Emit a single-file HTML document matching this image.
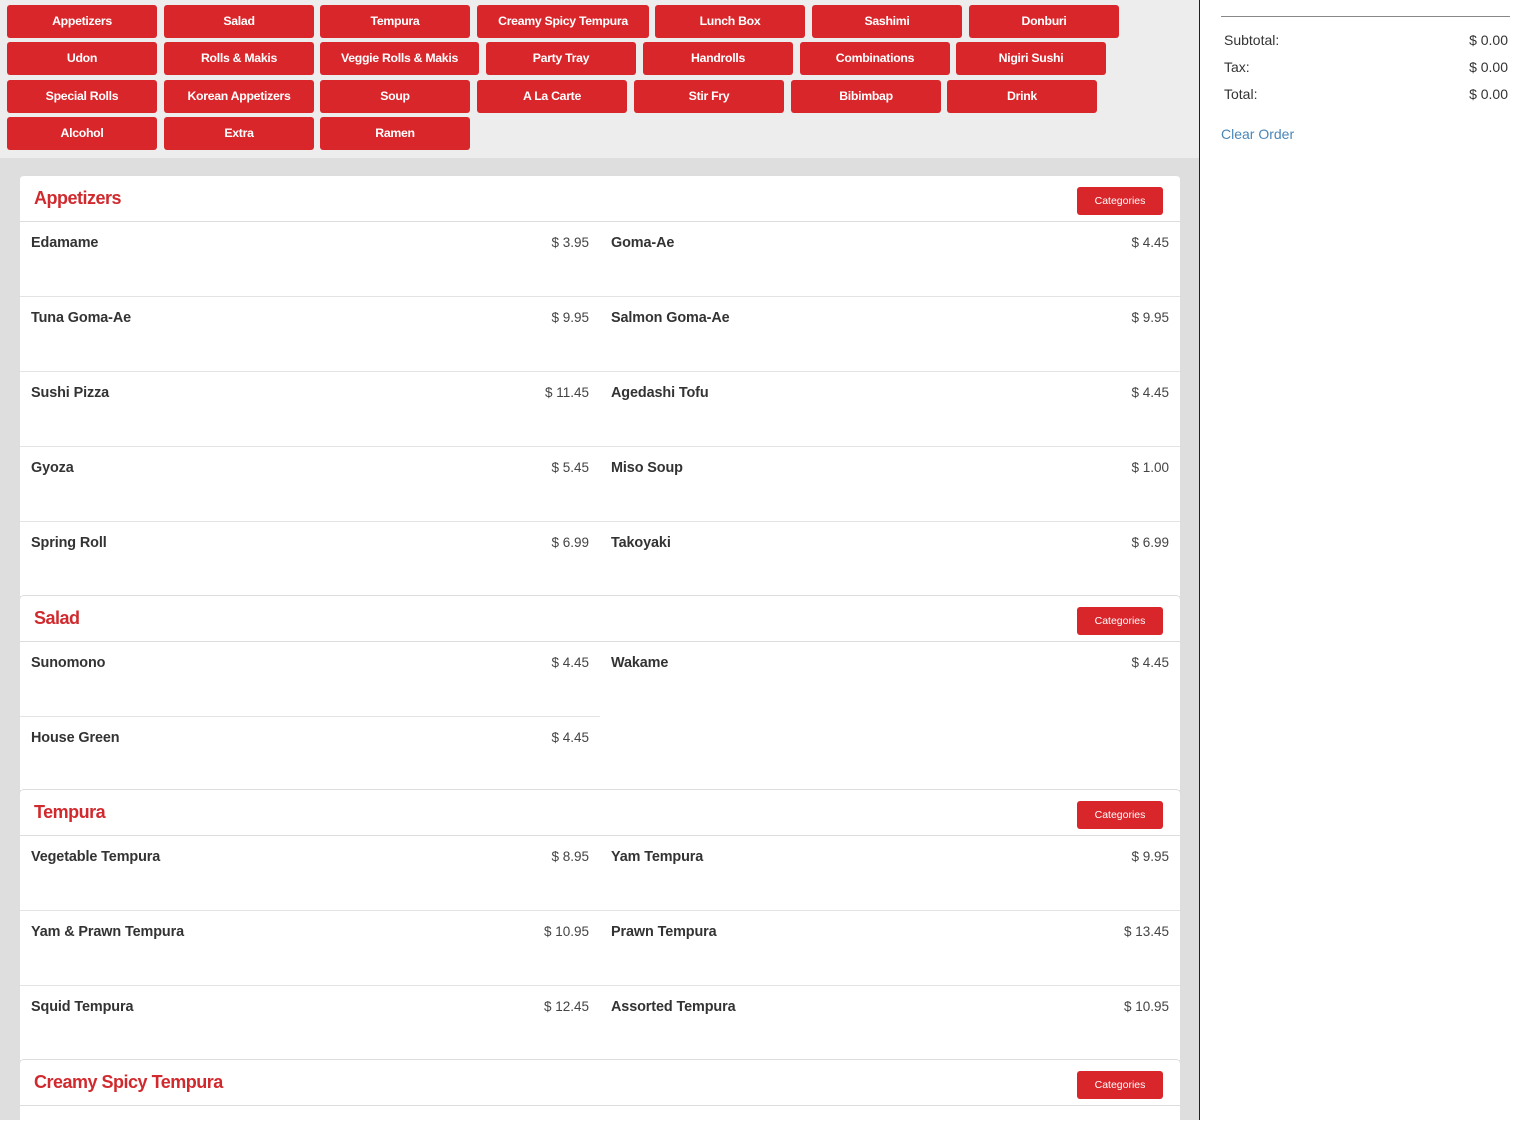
<!DOCTYPE html>
<html><head><meta charset="utf-8"><style>
*{box-sizing:border-box;margin:0;padding:0}
body{width:1530px;height:1120px;overflow:hidden;background:#fff;font-family:"Liberation Sans",Arial,sans-serif;position:relative}
#left{position:absolute;left:0;top:0;width:1200px;height:1120px;background:#dedede;border-right:1px solid #222}
#nav{position:absolute;left:0;top:0;width:1199px;height:158px;background:#ededed}
.b{position:absolute;height:33px;background:#d9262b;color:#fff;border-radius:3px;font-size:12.3px;font-weight:bold;text-align:center;line-height:33px;letter-spacing:-0.3px}
.card{position:absolute;left:20px;width:1160px;background:#fff;border-radius:4px 4px 0 0;border-top:1px solid #ddd}
.hd{height:46px;border-bottom:1px solid #ddd;position:relative}
.hd h2{position:absolute;left:14px;top:12px;color:#d02a2e;font-size:18px;font-weight:bold;letter-spacing:-0.5px}
.cat{position:absolute;right:17px;top:11px;width:86px;height:28px;background:#d9262b;color:#fff;border-radius:3px;font-size:10.5px;text-align:center;line-height:28px}
.it{position:absolute;width:580px;height:75px;border-bottom:1px solid #e3e3e3}
.it .n{position:absolute;left:11px;top:13px;font-size:14.4px;font-weight:bold;color:#333;letter-spacing:-0.1px}
.it .p{position:absolute;right:11px;top:13px;font-size:13.5px;color:#444}
#side{position:absolute;left:1221px;top:0;width:289px}
.line{position:absolute;left:0;top:16px;width:289px;border-top:1px solid #888}
.r{position:absolute;left:3px;right:2px;font-size:14px;color:#333}
.r span{float:right}
</style></head><body>
<div id="left">
<div id="nav">
<div class="b" style="left:7px;top:5px;width:150px">Appetizers</div>
<div class="b" style="left:164px;top:5px;width:150px">Salad</div>
<div class="b" style="left:320px;top:5px;width:150px">Tempura</div>
<div class="b" style="left:477px;top:5px;width:172px">Creamy Spicy Tempura</div>
<div class="b" style="left:655px;top:5px;width:150px">Lunch Box</div>
<div class="b" style="left:812px;top:5px;width:150px">Sashimi</div>
<div class="b" style="left:969px;top:5px;width:150px">Donburi</div>
<div class="b" style="left:7px;top:42px;width:150px">Udon</div>
<div class="b" style="left:164px;top:42px;width:150px">Rolls &amp; Makis</div>
<div class="b" style="left:320px;top:42px;width:159px">Veggie Rolls &amp; Makis</div>
<div class="b" style="left:486px;top:42px;width:150px">Party Tray</div>
<div class="b" style="left:643px;top:42px;width:150px">Handrolls</div>
<div class="b" style="left:800px;top:42px;width:150px">Combinations</div>
<div class="b" style="left:956px;top:42px;width:150px">Nigiri Sushi</div>
<div class="b" style="left:7px;top:80px;width:150px">Special Rolls</div>
<div class="b" style="left:164px;top:80px;width:150px">Korean Appetizers</div>
<div class="b" style="left:320px;top:80px;width:150px">Soup</div>
<div class="b" style="left:477px;top:80px;width:150px">A La Carte</div>
<div class="b" style="left:634px;top:80px;width:150px">Stir Fry</div>
<div class="b" style="left:791px;top:80px;width:150px">Bibimbap</div>
<div class="b" style="left:947px;top:80px;width:150px">Drink</div>
<div class="b" style="left:7px;top:117px;width:150px">Alcohol</div>
<div class="b" style="left:164px;top:117px;width:150px">Extra</div>
<div class="b" style="left:320px;top:117px;width:150px">Ramen</div>
</div>

<div class="card" style="top:175px;height:421px">
<div class="hd"><h2>Appetizers</h2><div class="cat">Categories</div></div>
<div class="it" style="left:0;top:46px"><div class="n">Edamame</div><div class="p">$ 3.95</div></div>
<div class="it" style="left:580px;top:46px"><div class="n">Goma-Ae</div><div class="p">$ 4.45</div></div>
<div class="it" style="left:0;top:121px"><div class="n">Tuna Goma-Ae</div><div class="p">$ 9.95</div></div>
<div class="it" style="left:580px;top:121px"><div class="n">Salmon Goma-Ae</div><div class="p">$ 9.95</div></div>
<div class="it" style="left:0;top:196px"><div class="n">Sushi Pizza</div><div class="p">$ 11.45</div></div>
<div class="it" style="left:580px;top:196px"><div class="n">Agedashi Tofu</div><div class="p">$ 4.45</div></div>
<div class="it" style="left:0;top:271px"><div class="n">Gyoza</div><div class="p">$ 5.45</div></div>
<div class="it" style="left:580px;top:271px"><div class="n">Miso Soup</div><div class="p">$ 1.00</div></div>
<div class="it" style="left:0;top:346px;border:0"><div class="n">Spring Roll</div><div class="p">$ 6.99</div></div>
<div class="it" style="left:580px;top:346px;border:0"><div class="n">Takoyaki</div><div class="p">$ 6.99</div></div>
</div>

<div class="card" style="top:595px;height:195px">
<div class="hd"><h2>Salad</h2><div class="cat">Categories</div></div>
<div class="it" style="left:0;top:46px"><div class="n">Sunomono</div><div class="p">$ 4.45</div></div>
<div class="it" style="left:580px;top:46px;border:0"><div class="n">Wakame</div><div class="p">$ 4.45</div></div>
<div class="it" style="left:0;top:121px;border:0"><div class="n">House Green</div><div class="p">$ 4.45</div></div>
</div>

<div class="card" style="top:789px;height:271px">
<div class="hd"><h2>Tempura</h2><div class="cat">Categories</div></div>
<div class="it" style="left:0;top:46px"><div class="n">Vegetable Tempura</div><div class="p">$ 8.95</div></div>
<div class="it" style="left:580px;top:46px"><div class="n">Yam Tempura</div><div class="p">$ 9.95</div></div>
<div class="it" style="left:0;top:121px"><div class="n">Yam &amp; Prawn Tempura</div><div class="p">$ 10.95</div></div>
<div class="it" style="left:580px;top:121px"><div class="n">Prawn Tempura</div><div class="p">$ 13.45</div></div>
<div class="it" style="left:0;top:196px;border:0"><div class="n">Squid Tempura</div><div class="p">$ 12.45</div></div>
<div class="it" style="left:580px;top:196px;border:0"><div class="n">Assorted Tempura</div><div class="p">$ 10.95</div></div>
</div>

<div class="card" style="top:1059px;height:70px">
<div class="hd"><h2>Creamy Spicy Tempura</h2><div class="cat">Categories</div></div>
</div>
</div>

<div id="side">
<div class="line"></div>
<div class="r" style="top:32px">Subtotal:<span>$ 0.00</span></div>
<div class="r" style="top:59px">Tax:<span>$ 0.00</span></div>
<div class="r" style="top:86px">Total:<span>$ 0.00</span></div>
<div style="position:absolute;left:0;top:126px;font-size:14px;color:#4a86b8">Clear Order</div>
</div>
</body></html>
